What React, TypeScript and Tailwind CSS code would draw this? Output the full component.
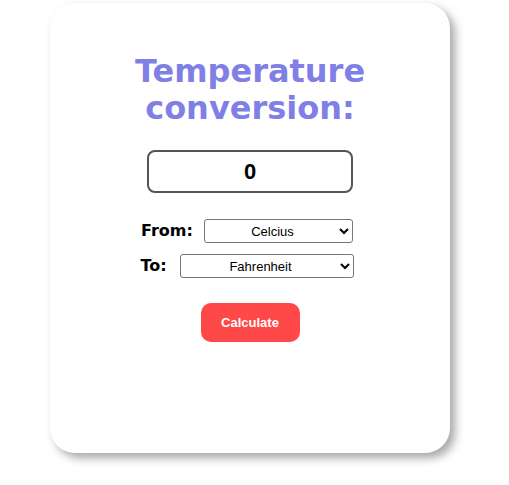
import React, { useState } from "react";

const App: React.FC = () => {
  const [value, setValue] = useState("0");
  const [from, setFrom] = useState("Celcius");
  const [to, setTo] = useState("Fahrenheit");

  return (
    <div className="min-h-[485px] w-[509px] bg-white pt-[3px] pl-[50px]">
      <div className="flex h-[450px] w-[400px] flex-col items-center rounded-[25px] bg-white pt-[50px] shadow-[5px_5px_10px_rgba(0,0,0,0.35)]">
        <h1 className="text-center font-['DejaVu_Sans',Verdana,sans-serif] text-[32px] leading-[37px] font-bold text-[#7f7fe6]">
          Temperature
          <br />
          conversion:
        </h1>

        <input
          className="mt-[23px] h-[43px] w-[206px] rounded-[8px] border-2 border-[#555] text-center font-['Liberation_Sans',Arial,sans-serif] text-[22px] font-bold text-black outline-none"
          value={value}
          onChange={(e) => setValue(e.target.value)}
        />

        <div className="mt-[26px] mr-[6px] flex w-[212px] items-center justify-between">
          <label className="font-['DejaVu_Sans',Verdana,sans-serif] text-[16px] font-bold text-black">
            From:
          </label>
          <select
            className="h-[24px] w-[149px] rounded-[3px] border border-[#767676] bg-white text-center font-['Liberation_Sans',Arial,sans-serif] text-[13px] text-black"
            value={from}
            onChange={(e) => setFrom(e.target.value)}
          >
            <option>Celcius</option>
            <option>Fahrenheit</option>
            <option>Kelvin</option>
          </select>
        </div>

        <div className="mt-[11px] mr-[6px] flex w-[213px] items-center justify-between">
          <label className="font-['DejaVu_Sans',Verdana,sans-serif] text-[16px] font-bold text-black">
            To:
          </label>
          <select
            className="h-[24px] w-[174px] rounded-[3px] border border-[#767676] bg-white text-center font-['Liberation_Sans',Arial,sans-serif] text-[13px] text-black"
            value={to}
            onChange={(e) => setTo(e.target.value)}
          >
            <option>Celcius</option>
            <option>Fahrenheit</option>
            <option>Kelvin</option>
          </select>
        </div>

        <button className="mt-[25px] h-[39px] w-[99px] rounded-[10px] bg-[#ff4848] font-['Liberation_Sans',Arial,sans-serif] text-[13px] font-bold text-white">
          Calculate
        </button>
      </div>
    </div>
  );
};

export default App;
